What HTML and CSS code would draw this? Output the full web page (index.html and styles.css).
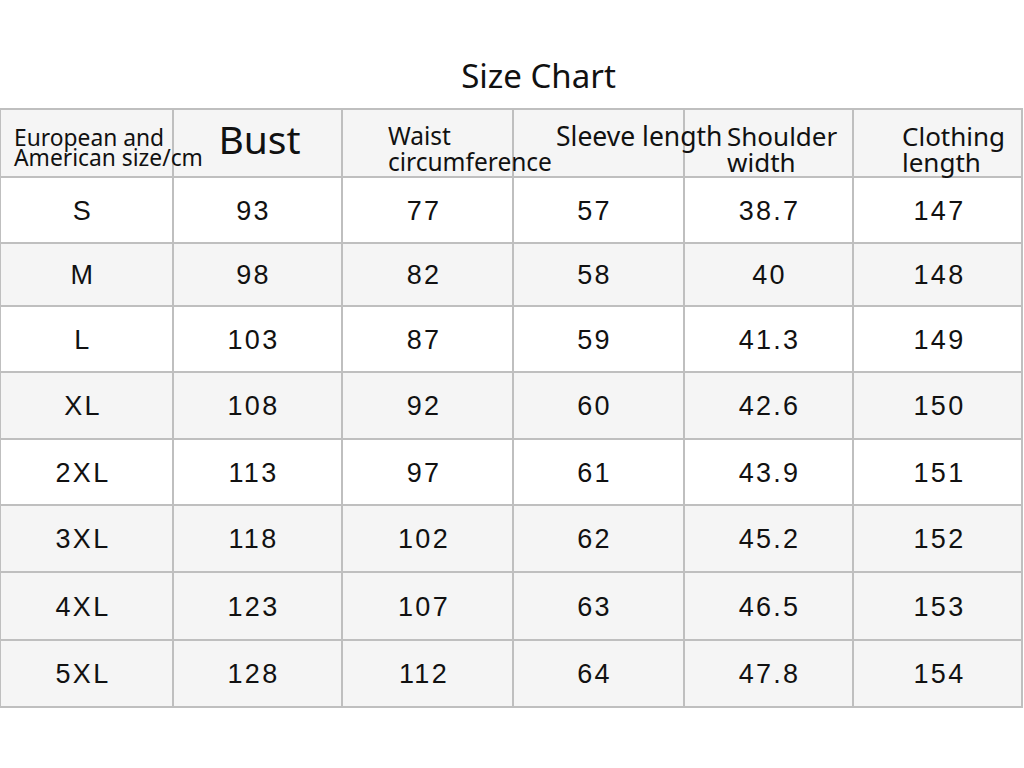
FILE: index.html
```html
<!DOCTYPE html>
<html lang="en">
<head>
<meta charset="utf-8">
<title>Size Chart</title>
<link rel="stylesheet" href="styles.css">
</head>
<body>
<div class="page">
  <h1 class="title">Size Chart</h1>
  <div class="table">
    <div class="row head">
      <div class="cell h-size">European and<br>American size/cm</div>
      <div class="cell h-bust">Bust</div>
      <div class="cell h-waist">Waist<br>circumference</div>
      <div class="cell h-sleeve">Sleeve length</div>
      <div class="cell h-shoulder">Shoulder<br>width</div>
      <div class="cell h-length">Clothing<br>length</div>
    </div>
    <div class="row light">
      <div class="cell c1">S</div><div class="cell c2">93</div><div class="cell c3">77</div><div class="cell c4">57</div><div class="cell c5">38.7</div><div class="cell c6">147</div>
    </div>
    <div class="row grey">
      <div class="cell c1">M</div><div class="cell c2">98</div><div class="cell c3">82</div><div class="cell c4">58</div><div class="cell c5">40</div><div class="cell c6">148</div>
    </div>
    <div class="row light">
      <div class="cell c1">L</div><div class="cell c2">103</div><div class="cell c3">87</div><div class="cell c4">59</div><div class="cell c5">41.3</div><div class="cell c6">149</div>
    </div>
    <div class="row grey">
      <div class="cell c1">XL</div><div class="cell c2">108</div><div class="cell c3">92</div><div class="cell c4">60</div><div class="cell c5">42.6</div><div class="cell c6">150</div>
    </div>
    <div class="row light">
      <div class="cell c1">2XL</div><div class="cell c2">113</div><div class="cell c3">97</div><div class="cell c4">61</div><div class="cell c5">43.9</div><div class="cell c6">151</div>
    </div>
    <div class="row grey">
      <div class="cell c1">3XL</div><div class="cell c2">118</div><div class="cell c3">102</div><div class="cell c4">62</div><div class="cell c5">45.2</div><div class="cell c6">152</div>
    </div>
    <div class="row grey">
      <div class="cell c1">4XL</div><div class="cell c2">123</div><div class="cell c3">107</div><div class="cell c4">63</div><div class="cell c5">46.5</div><div class="cell c6">153</div>
    </div>
    <div class="row grey">
      <div class="cell c1">5XL</div><div class="cell c2">128</div><div class="cell c3">112</div><div class="cell c4">64</div><div class="cell c5">47.8</div><div class="cell c6">154</div>
    </div>
  </div>
</div>
</body>
</html>
```
FILE: styles.css
```css
* { box-sizing: border-box; }
html, body { margin: 0; padding: 0; background: #ffffff; }
body { width: 1024px; height: 768px; overflow: hidden; color: #111111; }

.page { padding-top: 56px; }

.title {
  margin: 0 0 12px 0;
  padding-left: 53px;
  text-align: center;
  font-family: "Noto Sans", "Open Sans", sans-serif;
  font-weight: 400;
  font-size: 33px;
  line-height: 40px;
  color: #111111;
}

.table {
  width: 1023px;
  display: grid;
  grid-template-rows: 68px 66px 63px 66px 67px 66px 67px 68px 67px;
  border-top: 2px solid #bfbfbf;
  border-left: 1px solid #bfbfbf;
}

.row {
  display: grid;
  grid-template-columns: 173px 169px 171px 171px 169px 169px;
  border-bottom: 2px solid #bfbfbf;
}
.row.head, .row.grey { background: #f5f5f5; }
.row.light { background: #ffffff; }

.cell {
  border-right: 2px solid #bfbfbf;
  white-space: nowrap;
  overflow: visible;
}

.row.head .cell {
  font-family: "Noto Sans", "Open Sans", sans-serif;
  color: #111111;
  font-size: 26.5px;
  line-height: 26px;
  padding-top: 13px;
}
.row.head .h-size { font-size: 22.8px; line-height: 20px; padding-top: 18px; padding-left: 13px; }
.row.head .h-bust { font-size: 39px; line-height: 38px; padding-top: 10px; padding-left: 4px; text-align: center; }
.row.head .h-waist { font-size: 24.5px; line-height: 26px; padding-top: 13px; padding-left: 45px; }
.row.head .h-sleeve { padding-left: 42px; }
.row.head .h-shoulder { font-size: 26px; padding-left: 42px; }
.row.head .h-length { font-size: 26px; padding-left: 48px; }

.row.light .cell, .row.grey .cell {
  display: flex;
  align-items: center;
  justify-content: center;
  font-family: "Liberation Sans", Arial, sans-serif;
  font-size: 27px;
  letter-spacing: 2.3px;
  color: #111111;
  padding-top: 2px;
}
.row .c1 { padding-right: 7px; }
.row .c2 { padding-right: 8px; }
.row .c3 { padding-right: 7px; }
.row .c4 { padding-right: 8px; }
.row .c5 { padding-left: 2px; }
.row .c6 { padding-left: 4px; }
```
